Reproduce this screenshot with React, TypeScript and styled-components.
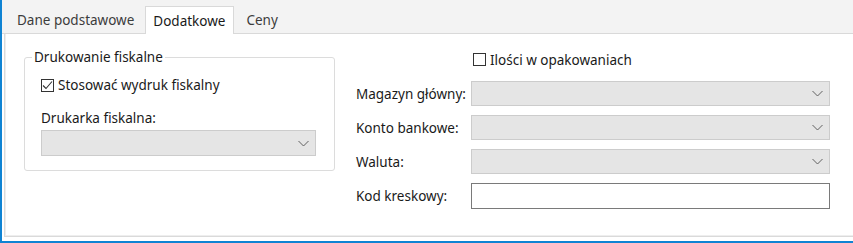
import React from "react";
import styled, { createGlobalStyle } from "styled-components";

const GlobalStyle = createGlobalStyle`
  html, body { margin: 0; padding: 0; background: #ffffff; }
  body {
    font-family: "Noto Sans", "Open Sans", sans-serif;
    font-size: 13.5px;
    color: #1a1a1a;
  }
  * { box-sizing: border-box; }
`;

const Window = styled.div`
  width: 853px;
  height: 243px;
  border-left: 2px solid #0f83d3;
  border-bottom: 2px solid #0f83d3;
  display: flex;
  flex-direction: column;
  background: #ffffff;
`;

const TabStrip = styled.div`
  height: 34px;
  flex: none;
  background: #f3f3f3;
  border-bottom: 1px solid #d9d9d9;
  display: flex;
  align-items: flex-end;
  padding-left: 3px;
`;

const Tab = styled.div<{ $active?: boolean }>`
  height: ${(p) => (p.$active ? "28px" : "26px")};
  margin-bottom: ${(p) => (p.$active ? "-1px" : "0")};
  display: flex;
  align-items: center;
  padding: ${(p) => (p.$active ? "1px 8px 0 7px" : "0 10px 1px 12px")};
  margin-left: ${(p) => (p.$active ? "1px" : "0")};
  background: ${(p) => (p.$active ? "#ffffff" : "transparent")};
  border: ${(p) => (p.$active ? "1px solid #d9d9d9" : "none")};
  border-bottom: none;
  color: ${(p) => (p.$active ? "#1a1a1a" : "#3c3c3c")};
  white-space: nowrap;
`;

const Page = styled.div`
  flex: 1;
  margin-left: 2px;
  margin-bottom: 4px;
  border-left: 1px solid #dadada;
  border-bottom: 1px solid #dadada;
  box-shadow: inset 1px -1px 0 #eeeeee;
  display: flex;
  align-items: flex-start;
  gap: 21px;
  padding: 14px 0 0 19px;
`;

const GroupBox = styled.fieldset`
  margin: 0;
  padding: 0;
  width: 311px;
  border: 1px solid #dcdcdc;
  border-radius: 3px;
  min-width: 0;
`;

const GroupTitle = styled.legend`
  margin-left: 7px;
  padding: 0 2px;
  line-height: 18px;
  color: #1a1a1a;
`;

const GroupBody = styled.div`
  display: flex;
  flex-direction: column;
  padding: 10px 18px 14px 16px;
`;

const CheckRow = styled.label`
  display: flex;
  align-items: center;
  height: 18px;
  gap: 4px;
  white-space: nowrap;
`;

const Box = styled.span`
  width: 13px;
  height: 13px;
  flex: none;
  border: 1px solid #333333;
  background: #ffffff;
  display: flex;
  align-items: center;
  justify-content: center;
`;

const FieldLabel = styled.div<{ $top?: number }>`
  line-height: 18px;
  margin-top: ${(p) => p.$top ?? 0}px;
  white-space: nowrap;
`;

const Combo = styled.div<{ $h?: number; $top?: number }>`
  height: ${(p) => p.$h ?? 25}px;
  margin-top: ${(p) => p.$top ?? 0}px;
  background: #e5e5e5;
  border: 1px solid #cccccc;
  display: flex;
  align-items: center;
  justify-content: flex-end;
  padding-right: 6px;
`;

const TextInput = styled.div`
  height: 26px;
  background: #ffffff;
  border: 1px solid #7a7a7a;
`;

const RightForm = styled.div`
  margin-top: -1px;
  display: grid;
  grid-template-columns: 115px 359px;
  grid-auto-rows: 25px;
  row-gap: 9px;
  align-items: center;
`;

const CheckCell = styled.div`
  grid-column: 2;
  display: flex;
  align-items: center;
  padding-left: 2px;
`;

const RowLabel = styled.div`
  white-space: nowrap;
`;

const Chevron = () => (
  <svg width="11" height="7" viewBox="0 0 11 7">
    <path d="M0.5 1 L5.5 6 L10.5 1" fill="none" stroke="#606060" strokeWidth="1" />
  </svg>
);

const Check = () => (
  <svg width="11" height="11" viewBox="0 0 11 11">
    <path d="M1 5.5 L4 8.5 L10 1.5" fill="none" stroke="#333333" strokeWidth="1.1" />
  </svg>
);

export default function App() {
  return (
    <>
      <GlobalStyle />
      <Window>
        <TabStrip>
          <Tab>Dane podstawowe</Tab>
          <Tab $active>Dodatkowe</Tab>
          <Tab>Ceny</Tab>
        </TabStrip>
        <Page>
          <GroupBox>
            <GroupTitle>Drukowanie fiskalne</GroupTitle>
            <GroupBody>
              <CheckRow>
                <Box>
                  <Check />
                </Box>
                Stosować wydruk fiskalny
              </CheckRow>
              <FieldLabel $top={15}>Drukarka fiskalna:</FieldLabel>
              <Combo $h={26} $top={3}>
                <Chevron />
              </Combo>
            </GroupBody>
          </GroupBox>
          <RightForm>
            <CheckCell>
              <CheckRow>
                <Box />
                Ilości w opakowaniach
              </CheckRow>
            </CheckCell>
            <RowLabel>Magazyn główny:</RowLabel>
            <Combo>
              <Chevron />
            </Combo>
            <RowLabel>Konto bankowe:</RowLabel>
            <Combo>
              <Chevron />
            </Combo>
            <RowLabel>Waluta:</RowLabel>
            <Combo>
              <Chevron />
            </Combo>
            <RowLabel>Kod kreskowy:</RowLabel>
            <TextInput />
          </RightForm>
        </Page>
      </Window>
    </>
  );
}
